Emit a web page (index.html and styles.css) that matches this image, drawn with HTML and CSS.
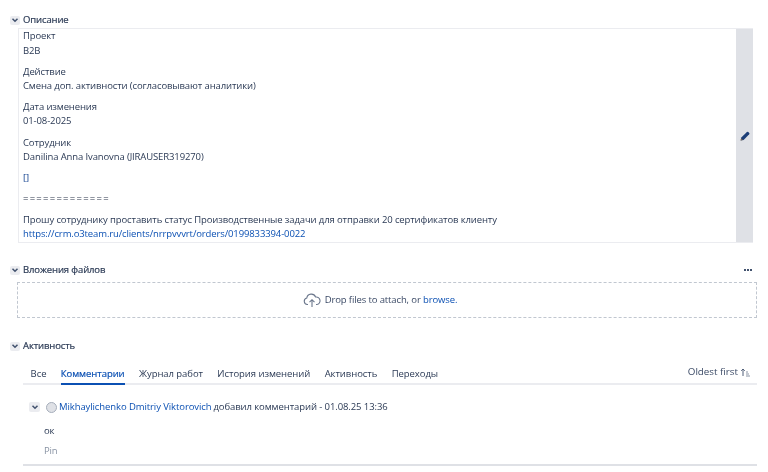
FILE: index.html
```html
<!DOCTYPE html>
<html lang="ru">
<head>
<meta charset="utf-8">
<title>Описание</title>
<link rel="stylesheet" href="styles.css">
</head>
<body>
<section class="module desc-module">
  <h2 class="mod-head"><span class="toggle"><svg viewBox="0 0 8 8" width="8" height="8"><path d="M1.5 2.8 4 5.3l2.5-2.5" fill="none" stroke="#42526e" stroke-width="1.5"/></svg></span>Описание</h2>
  <div class="desc">
    <div class="desc-text">
      <p>Проект<br>B2B</p>
      <p>Действие<br>Смена доп. активности (согласовывают аналитики)</p>
      <p>Дата изменения<br>01-08-2025</p>
      <p>Сотрудник<br>Danilina Anna Ivanovna (JIRAUSER319270)</p>
      <p class="blue-dark">[]</p>
      <p class="rule">=============</p>
      <p>Прошу сотруднику проставить статус Производственные задачи для отправки 20 сертификатов клиенту<br><a href="#">https://crm.o3team.ru/clients/nrrpvvvrt/orders/0199833394-0022</a></p>
    </div>
    <div class="edit-bar"><svg viewBox="0 0 12 12" width="12" height="12"><path d="M1.6 10.6 2.3 7.6 7.9 2a1 1 0 0 1 1.4 0l.9.9a1 1 0 0 1 0 1.4L4.6 9.9Z" fill="#1d3f78"/><path d="M1.6 10.6 2.3 8.4l1.5 1.5Z" fill="#8a6d4b"/></svg></div>
  </div>
</section>

<section class="module attach-module">
  <h2 class="mod-head"><span class="toggle"><svg viewBox="0 0 8 8" width="8" height="8"><path d="M1.5 2.8 4 5.3l2.5-2.5" fill="none" stroke="#42526e" stroke-width="1.5"/></svg></span>Вложения файлов<span class="dots"><i></i><i></i><i></i></span></h2>
  <div class="drop">
    <svg class="cloud" viewBox="0 0 18 16" width="18" height="16"><path d="M5 12.5H4.3A3.3 3.3 0 0 1 3.8 6a4.6 4.6 0 0 1 8.8-1 3.8 3.8 0 0 1 1.3 7.5H13" fill="none" stroke="#6b778c" stroke-width="1.1"/><path d="M9 15V8M6.5 10.2 9 7.7l2.5 2.5" fill="none" stroke="#6b778c" stroke-width="1.1"/></svg>
    <span>Drop files to attach, or <a href="#">browse.</a></span>
  </div>
</section>

<section class="module activity-module">
  <h2 class="mod-head"><span class="toggle"><svg viewBox="0 0 8 8" width="8" height="8"><path d="M1.5 2.8 4 5.3l2.5-2.5" fill="none" stroke="#42526e" stroke-width="1.5"/></svg></span>Активность</h2>
  <div class="tabs">
    <span class="tab">Все</span>
    <span class="tab active">Комментарии</span>
    <span class="tab">Журнал работ</span>
    <span class="tab">История изменений</span>
    <span class="tab">Активность</span>
    <span class="tab">Переходы</span>
    <span class="sort">Oldest first <svg viewBox="0 0 10 10" width="10" height="10"><path d="M3 9V2M1.2 3.8 3 2l1.8 1.8" fill="none" stroke="#505f79" stroke-width="1"/><path d="M6 5h2M6 7h3M6 9h4" stroke="#8993a4" stroke-width="1"/></svg></span>
  </div>
  <div class="comment">
    <div class="comment-head">
      <span class="toggle"><svg viewBox="0 0 8 8" width="8" height="8"><path d="M1.5 2.8 4 5.3l2.5-2.5" fill="none" stroke="#42526e" stroke-width="1.5"/></svg></span>
      <span class="avatar"></span>
      <a href="#">Mikhaylichenko Dmitriy Viktorovich</a>
      <span>добавил комментарий - 01.08.25 13:36</span>
    </div>
    <p class="comment-body">ок</p>
    <p class="pin">Pin</p>
  </div>
</section>
</body>
</html>
```
FILE: styles.css
```css
* { box-sizing: border-box; }
html, body { margin: 0; padding: 0; }
body {
  width: 768px;
  height: 472px;
  overflow: hidden;
  background: #fff;
  color: #2b3a55;
  font: 9.5px/14.3px "Open Sans", "Noto Sans", sans-serif;
  letter-spacing: -0.12px;
  padding-top: 13px;
  filter: blur(0.3px);
}
a { color: #0b50b3; text-decoration: none; }
p { margin: 0; }
.mod-head {
  margin: 0;
  display: flex;
  align-items: center;
  height: 14px;
  padding-left: 10px;
  font-size: 9.5px;
  font-weight: 400;
  color: #2b3a55;
  -webkit-text-stroke: 0.2px #2b3a55;
}
.toggle {
  width: 10px;
  height: 9px;
  background: #ebecf0;
  border-radius: 2px;
  display: inline-flex;
  align-items: center;
  justify-content: center;
  margin-right: 3px;
  flex: none;
}
.desc {
  margin: 1px 15px 0 18px;
  height: 215px;
  display: flex;
  border-top: 1px solid #ebecf0;
  border-bottom: 1px solid #ebecf0;
  border-left: 1px solid #ebecf0;
}
.desc-text {
  flex: 1;
  padding-left: 4px;
  padding-top: 0.4px;
}
.desc-text p { margin-bottom: 6.8px; }
.desc-text p:last-child { margin-bottom: 0; }
.blue-dark { color: #0b3c8c; }
.rule { letter-spacing: 1.25px; color: #1f2a40; }
.edit-bar {
  width: 17px;
  background: #dfe1e6;
  display: flex;
  align-items: center;
  justify-content: center;
}
.attach-module { margin-top: 20px; }
.dots { margin-left: auto; margin-right: 16px; display: inline-flex; gap: 1px; }
.dots i { width: 2px; height: 2px; background: #42526e; }
.drop {
  margin: 5px 11px 0 17px;
  height: 36px;
  border: 1px dashed #c1c7d0;
  display: flex;
  align-items: center;
  justify-content: center;
  gap: 4px;
  padding-right: 14px;
  color: #3b4a66;
}
.activity-module { margin-top: 21px; }
.tabs {
  margin: 7px 11px 0 23px;
  height: 25px;
  display: flex;
  align-items: flex-end;
  gap: 14.4px;
  padding-left: 7.6px;
  border-bottom: 2px solid #ebecf0;
  letter-spacing: -0.06px;
}
.tab { height: 22px; line-height: 22px; margin-bottom: -2px; color: #2b3a55; }
.tab.active {
  color: #0b50b3;
  border-bottom: 2px solid #0b50b3;
  -webkit-text-stroke: 0.2px #0b50b3;
}
.sort { margin-left: auto; margin-right: 7px; align-self: center; margin-top: 1px; font-size: 9.8px; letter-spacing: 0; display: inline-flex; align-items: center; gap: 2px; color: #3b4a66; }
.comment {
  margin: 0 11px 0 23px;
  height: 81px;
  border-bottom: 2px solid #dfe1e6;
  padding: 15px 0 0 6px;
}
.comment-head {
  display: flex;
  align-items: center;
  height: 14px;
  gap: 2px;
  letter-spacing: -0.09px;
}
.comment-head .toggle { margin-right: 4px; height: 10px; width: 11px; }
.avatar {
  width: 11px;
  height: 11px;
  border-radius: 50%;
  background: #dfe1e6;
  border: 1px solid #a5adba;
}
.comment-body { margin: 10px 0 0 15px; }
.pin { margin: 6px 0 0 15px; color: #8993a4; }
```
